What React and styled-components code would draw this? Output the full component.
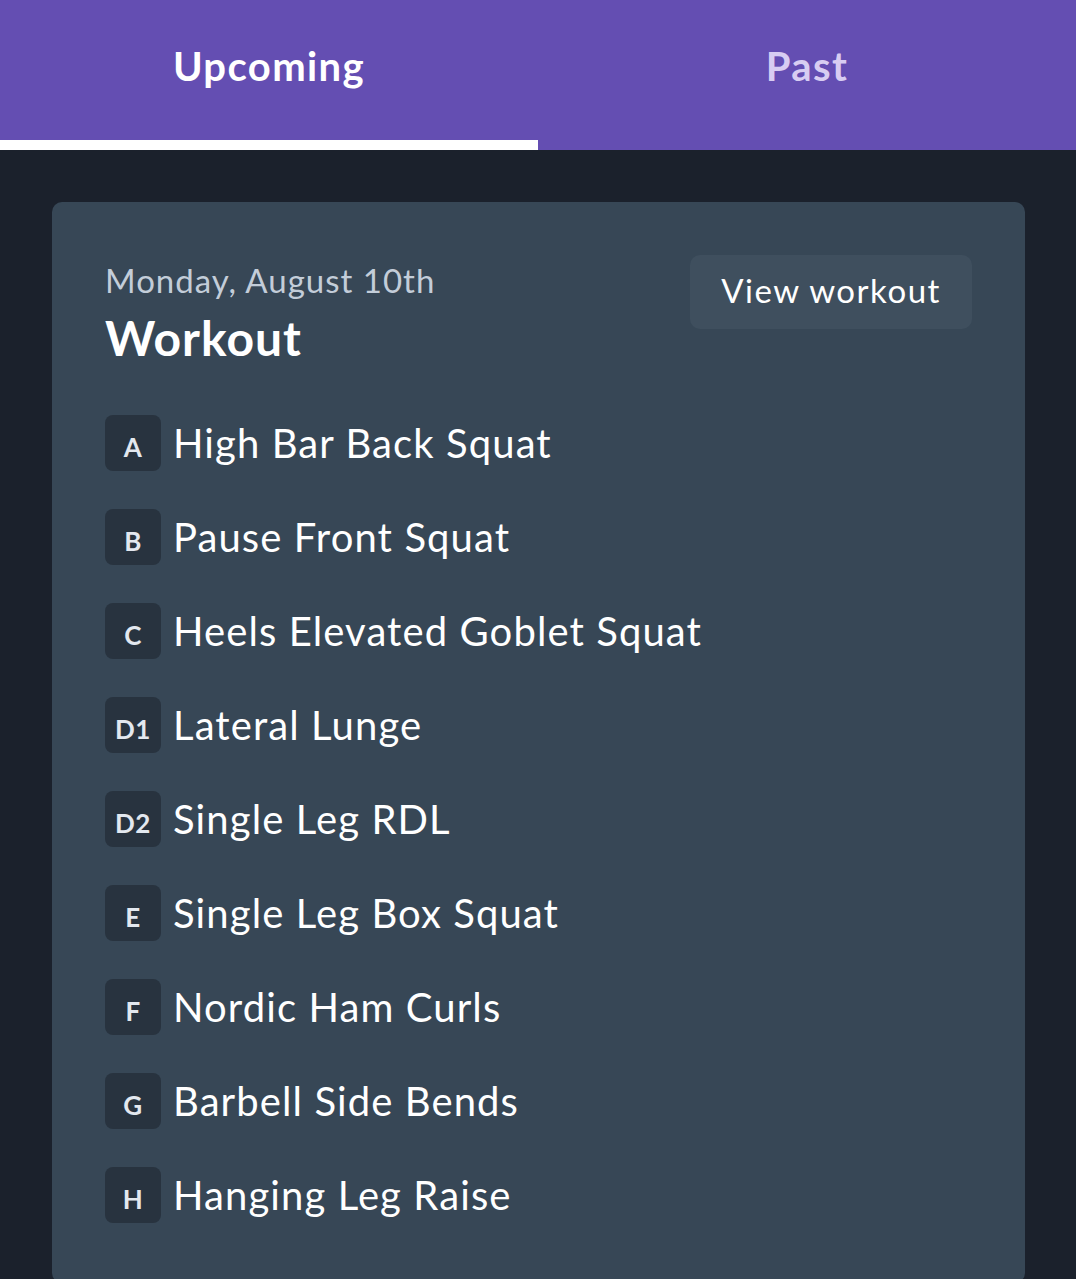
import React from "react";
import styled, { createGlobalStyle } from "styled-components";

const Global = createGlobalStyle`
  html, body { margin: 0; padding: 0; background: #1b212c; }
  body { font-family: Lato, "Noto Sans", sans-serif; -webkit-font-smoothing: antialiased; }
  * { box-sizing: border-box; }
`;

const Page = styled.div`
  min-height: 1279px;
  background: #1b212c;
  overflow: hidden;
`;

const TabBar = styled.div`
  display: flex;
  height: 150px;
  background: #644eb2;
`;

const Tab = styled.div`
  flex: 1;
  display: flex;
  justify-content: center;
  padding-top: 40px;
  font-size: 40px;
  font-weight: 700;
  letter-spacing: 1.4px;
  line-height: 52px;
  color: ${(p) => (p.$active ? "#ffffff" : "#d8cdf2")};
  border-bottom: 10px solid ${(p) => (p.$active ? "#ffffff" : "transparent")};
`;

const Card = styled.div`
  margin: 52px 51px 0 52px;
  background: #374756;
  border-radius: 10px;
  padding: 53px 53px 60px 53px;
  min-height: 1077px;
`;

const Head = styled.div`
  display: flex;
  justify-content: space-between;
  align-items: flex-start;
`;

const Titles = styled.div`
  display: flex;
  flex-direction: column;
`;

const DateText = styled.div`
  font-size: 33px;
  line-height: 50px;
  letter-spacing: 1px;
  color: #c3cdd9;
`;

const Title = styled.div`
  margin-top: 5px;
  font-size: 48px;
  font-weight: 700;
  letter-spacing: 1px;
  line-height: 56px;
  color: #ffffff;
`;

const Button = styled.button`
  width: 282px;
  height: 74px;
  border: none;
  border-radius: 10px;
  background: #3f4f5e;
  color: #ffffff;
  font-family: inherit;
  font-size: 33px;
  letter-spacing: 1.5px;
  padding: 0 0 4px;
`;

const List = styled.div`
  display: flex;
  flex-direction: column;
  gap: 38px;
  margin-top: 49px;
`;

const Row = styled.div`
  display: flex;
  align-items: center;
  gap: 12px;
`;

const Badge = styled.div`
  width: 56px;
  height: 56px;
  border-radius: 8px;
  background: #28333f;
  color: #e3e8ef;
  font-size: 26px;
  font-weight: 700;
  letter-spacing: 0.5px;
  display: flex;
  align-items: center;
  justify-content: center;
  padding-top: 8px;
`;

const Name = styled.div`
  font-size: 40px;
  line-height: 56px;
  letter-spacing: 1.1px;
  color: #ffffff;
`;

const items = [
  ["A", "High Bar Back Squat"],
  ["B", "Pause Front Squat"],
  ["C", "Heels Elevated Goblet Squat"],
  ["D1", "Lateral Lunge"],
  ["D2", "Single Leg RDL"],
  ["E", "Single Leg Box Squat"],
  ["F", "Nordic Ham Curls"],
  ["G", "Barbell Side Bends"],
  ["H", "Hanging Leg Raise"],
];

export default function App() {
  return (
    <Page>
      <Global />
      <TabBar>
        <Tab $active>Upcoming</Tab>
        <Tab>Past</Tab>
      </TabBar>
      <Card>
        <Head>
          <Titles>
            <DateText>Monday, August 10th</DateText>
            <Title>Workout</Title>
          </Titles>
          <Button>View workout</Button>
        </Head>
        <List>
          {items.map(([k, n]) => (
            <Row key={k}>
              <Badge>{k}</Badge>
              <Name>{n}</Name>
            </Row>
          ))}
        </List>
      </Card>
    </Page>
  );
}
